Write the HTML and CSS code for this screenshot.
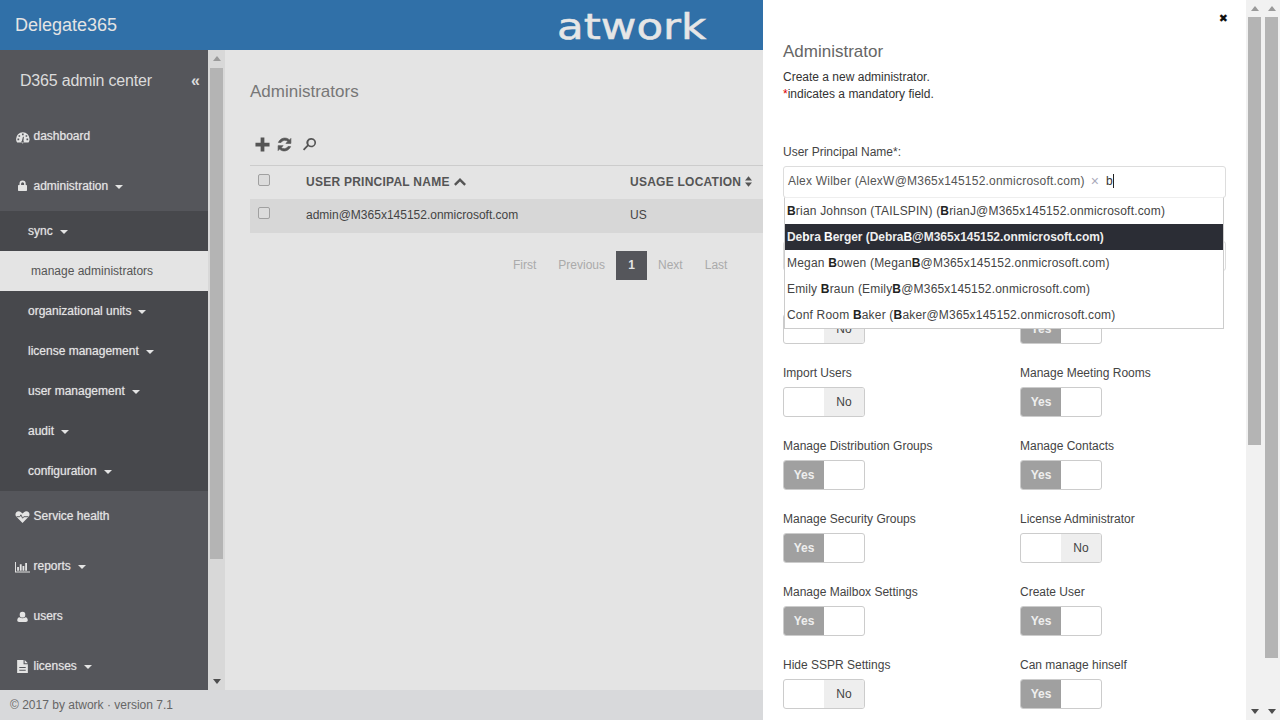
FILE: index.html
```html
<!DOCTYPE html>
<html lang="en">
<head>
<meta charset="utf-8">
<title>Delegate365</title>
<link rel="stylesheet" href="styles.css">
</head>
<body>
<div class="page">
  <header class="topbar">
    <div class="brand">Delegate365</div>
    <div class="logo">atwork</div>
  </header>
  <div class="middle">
    <aside class="sidebar">
      <div class="side-title"><span class="side-name">D365 admin center</span><span class="collapse">«</span></div>
      <nav class="nav">
        <a class="item"><svg class="ico" viewBox="0 0 14 14"><path transform="translate(.3 .8)" d="M7 2.200a6.300 6.300 0 0 0-6.300 6.300c0 1.300.3 2.300 1 3.300h10.600c.7-1 1-2 1-3.300A6.300 6.300 0 0 0 7 2.200zM6.200 3.400h1.600v1.600H6.200zM3 5h1.500v1.500H3zM9.600 5h1.500v1.500H9.600zM2 8h1.600v1.600H2zM10.400 8H12v1.600h-1.600zM6.100 10.400l1-4 .9.100-.4 4a1.200 1.200 0 1 1-1.500-.1z" fill-rule="evenodd"/></svg>dashboard</a>
        <a class="item"><svg class="ico" viewBox="0 0 14 14"><path d="M4.200 5.600V4.400a2.900 2.900 0 0 1 5.800 0v1.200h.6c.3 0 .6.300.6.600v4.400c0 .3-.3.600-.6.600H3.400c-.3 0-.6-.3-.6-.6V6.200c0-.3.300-.6.600-.6zm1.500 0h2.800V4.400a1.400 1.400 0 0 0-2.800 0z"/></svg>administration<i class="caret"></i></a>
        <div class="sub">
          <a class="subitem">sync<i class="caret"></i></a>
          <a class="subitem active">manage administrators</a>
          <a class="subitem">organizational units<i class="caret"></i></a>
          <a class="subitem">license management<i class="caret"></i></a>
          <a class="subitem">user management<i class="caret"></i></a>
          <a class="subitem">audit<i class="caret"></i></a>
          <a class="subitem">configuration<i class="caret"></i></a>
        </div>
        <a class="item"><svg class="ico" viewBox="0 0 14 14"><path d="M7 13 1.300 7.300C.1 6 .2 4 1.200 3 2.400 1.800 4.400 1.800 5.600 3L7 4.300 8.400 3c1.200-1.200 3.200-1.200 4.400 0 1 1 1.100 3-.1 4.300z"/><path d="M1.500 7.200h3l1-1.800 1.600 3.200 1.100-1.400h4.300" fill="none" stroke="#55565b" stroke-width=".9"/></svg>Service health</a>
        <a class="item"><svg class="ico" viewBox="0 0 14 14"><path d="M0 2.800h.9v8.800H14v.9H0zM2 7.500h1.700v3.500H2zM4.500 5h1.700v6H4.500zM7 6.500h1.700v4.500H7zM9.500 3.800h1.700V11H9.500z"/></svg>reports<i class="caret"></i></a>
        <a class="item"><svg class="ico" viewBox="0 0 14 14"><path d="M7 2.500a2.600 2.600 0 0 1 2.600 2.800A2.600 2.600 0 0 1 7 8a2.600 2.600 0 0 1-2.600-2.700A2.600 2.600 0 0 1 7 2.500zM4.200 7.800c.7.600 1.700.9 2.800.9s2.100-.3 2.800-.9c1.400.2 2.100 1.300 2.100 2.800 0 1-.7 1.600-1.700 1.600H3.800c-1 0-1.700-.6-1.700-1.600 0-1.500.7-2.600 2.100-2.800z"/></svg>users</a>
        <a class="item"><svg class="ico" viewBox="0 0 14 14"><path d="M2 1h6v3.800h4V13H2zM9 1l3 2.900H9zM4 7.500v1h6v-1zM4 10v1h6v-1z" fill-rule="evenodd"/></svg>licenses<i class="caret"></i></a>
      </nav>
    </aside>
    <div class="scrollbar side-scroll"><i class="arrow up"></i><div class="track"><div class="thumb"></div></div><i class="arrow down"></i></div>
    <main class="content">
      <h1 class="page-title">Administrators</h1>
      <div class="toolbar">
        <svg class="tool plus" viewBox="0 0 16 16"><path d="M6 .5h4v5.500h5.500v4H10v5.500H6V10H.5V6H6z"/></svg>
        <svg class="tool refresh" viewBox="0 0 16 16"><path d="M14.800 1.500v5.300H9.500l2-2a4.700 4.700 0 0 0-7.200 1H1.500a7.300 7.300 0 0 1 11.800-2.700zM1.200 14.500V9.200h5.300l-2 2a4.700 4.700 0 0 0 7.200-1h2.800a7.300 7.300 0 0 1-11.800 2.700z"/></svg>
        <svg class="tool search" viewBox="0 0 16 16"><path d="M10 1a5 5 0 1 1-3.300 8.800l-4.300 4.500L1 13l4.400-4.400A5 5 0 0 1 10 1zm0 1.800a3.200 3.200 0 1 0 0 6.400 3.200 3.200 0 0 0 0-6.400z" fill-rule="evenodd"/></svg>
      </div>
      <div class="table">
        <div class="row head">
          <div class="c-check"><i class="check"></i></div>
          <div class="c-name">User Principal Name <svg class="chev" viewBox="0 0 12 8"><path d="M6 0l6 6-1.700 1.700L6 3.400 1.700 7.700 0 6z"/></svg></div>
          <div class="c-loc">Usage Location <svg class="sort" viewBox="0 0 8 12"><path d="M4 0l4 4.800H0zM4 12L0 7.200h8z"/></svg></div>
        </div>
        <div class="row body">
          <div class="c-check"><i class="check"></i></div>
          <div class="c-name">admin@M365x145152.onmicrosoft.com</div>
          <div class="c-loc">US</div>
        </div>
      </div>
      <div class="pager">
        <a>First</a><a>Previous</a><a class="current">1</a><a>Next</a><a>Last</a>
      </div>
    </main>
  </div>
  <footer class="footer">© 2017 by atwork · version 7.1</footer>

  <section class="panel">
    <div class="panel-body">
      <div class="close">✖</div>
      <h2 class="panel-title">Administrator</h2>
      <p class="intro">Create a new administrator.<br><span class="req">*</span>indicates a mandatory field.</p>
      <label class="field-label">User Principal Name*:</label>
      <div class="picker">
        <div class="tagbox"><span class="tag">Alex Wilber (AlexW@M365x145152.onmicrosoft.com)</span><span class="tag-x">×</span><span class="typed">b</span><i class="cursor"></i></div>
        <ul class="suggest">
          <li><b>B</b>rian Johnson (TAILSPIN) (<b>B</b>rianJ@M365x145152.onmicrosoft.com)</li>
          <li class="hot">De<b>b</b>ra <b>B</b>erger (Debra<b>B</b>@M365x145152.onmicrosoft.com)</li>
          <li>Megan <b>B</b>owen (Megan<b>B</b>@M365x145152.onmicrosoft.com)</li>
          <li>Emily <b>B</b>raun (Emily<b>B</b>@M365x145152.onmicrosoft.com)</li>
          <li>Conf Room <b>B</b>aker (<b>B</b>aker@M365x145152.onmicrosoft.com)</li>
        </ul>
      </div>
      <div class="hidden-input"></div>
      <div class="grid">
        <div class="field"><div class="lab"></div><div class="toggle off"><span></span><span>No</span></div></div>
        <div class="field"><div class="lab"></div><div class="toggle on"><span>Yes</span><span></span></div></div>
        <div class="field"><div class="lab">Import Users</div><div class="toggle off"><span></span><span>No</span></div></div>
        <div class="field"><div class="lab">Manage Meeting Rooms</div><div class="toggle on"><span>Yes</span><span></span></div></div>
        <div class="field"><div class="lab">Manage Distribution Groups</div><div class="toggle on"><span>Yes</span><span></span></div></div>
        <div class="field"><div class="lab">Manage Contacts</div><div class="toggle on"><span>Yes</span><span></span></div></div>
        <div class="field"><div class="lab">Manage Security Groups</div><div class="toggle on"><span>Yes</span><span></span></div></div>
        <div class="field"><div class="lab">License Administrator</div><div class="toggle off"><span></span><span>No</span></div></div>
        <div class="field"><div class="lab">Manage Mailbox Settings</div><div class="toggle on"><span>Yes</span><span></span></div></div>
        <div class="field"><div class="lab">Create User</div><div class="toggle on"><span>Yes</span><span></span></div></div>
        <div class="field"><div class="lab">Hide SSPR Settings</div><div class="toggle off"><span></span><span>No</span></div></div>
        <div class="field"><div class="lab">Can manage hinself</div><div class="toggle on"><span>Yes</span><span></span></div></div>
      </div>
    </div>
    <div class="scrollbar panel-scroll"><i class="arrow up"></i><div class="track"><div class="thumb"></div></div><i class="arrow down"></i></div>
    <div class="scrollbar outer-scroll"><i class="arrow up"></i><div class="track"><div class="thumb"></div></div><i class="arrow down"></i></div>
  </section>
</div>
</body>
</html>
```
FILE: styles.css
```css
* { box-sizing: border-box; }
html, body { margin: 0; height: 100%; overflow: hidden; }
body { font-family: "Liberation Sans", Arial, sans-serif; font-size: 12px; color: #333; }
.page { position: relative; width: 1280px; height: 720px; display: flex; flex-direction: column; background: #e4e4e4; overflow: hidden; }

.topbar { height: 50px; flex: none; background: #3070a8; display: flex; align-items: center; position: relative; padding-left: 15px; }
.brand { font-size: 18px; color: #e4e4e4; }
.logo { position: absolute; left: 557px; top: 5px; font-family: "DejaVu Sans", sans-serif; font-size: 36px; line-height: 44px; color: #e6e6e6; font-weight: 400; -webkit-text-stroke: .5px #e6e6e6; transform: scaleX(1.21); transform-origin: left top; }

.middle { flex: 1; display: flex; min-height: 0; }
.sidebar { width: 208px; flex: none; background: #55565b; color: #e4e4e4; overflow: hidden; }
.side-title { height: 61px; display: flex; align-items: center; justify-content: space-between; padding: 0 8px 0 20px; font-size: 16px; color: #dcdcdc; }
.side-name { letter-spacing: -.2px; }
.collapse { font-size: 16px; font-weight: 700; padding-top: 1px; }
.nav { display: flex; flex-direction: column; }
.item { height: 50px; flex: none; display: flex; align-items: center; padding-left: 15px; text-shadow: 0 0 1px rgba(228,228,228,.6); }
.ico { width: 15px; height: 15px; flex: none; margin-right: 3.5px; fill: #e4e4e4; }
.caret { display: inline-block; width: 0; height: 0; margin-left: 7px; margin-top: 1px; border-left: 4px solid transparent; border-right: 4px solid transparent; border-top: 4px solid #e4e4e4; }
.sub { background: #47484c; display: flex; flex-direction: column; }
.subitem { height: 40px; flex: none; display: flex; align-items: center; padding-left: 28px; text-shadow: 0 0 1px rgba(228,228,228,.6); }
.subitem.active { background: #e4e4e4; color: #555; padding-left: 31px; text-shadow: none; }

.scrollbar { width: 17px; flex: none; background: #d8d8d8; display: flex; flex-direction: column; align-items: center; }
.track { flex: 1; width: 100%; padding: 0 2px; min-height: 0; }
.thumb { width: 13px; background: #b4b4b4; }
.arrow { display: block; width: 0; height: 0; flex: none; margin: 6px 0; border-left: 4px solid transparent; border-right: 4px solid transparent; }
.arrow.up { border-bottom: 5px solid #9a9a9a; }
.arrow.down { border-top: 5px solid #4d4d4d; }
.side-scroll .thumb { height: 491px; margin-top: 1px; }

.content { flex: 1; min-width: 0; padding-left: 25px; overflow: hidden; }
.page-title { margin: 32px 0 0; height: 20px; font-size: 17px; line-height: 20px; font-weight: 400; color: #777; }
.toolbar { height: 24px; margin-top: 30px; display: flex; align-items: center; padding-left: 5px; }
.tool { fill: #555; flex: none; }
.plus { width: 15px; height: 15px; }
.refresh { width: 15px; height: 15px; margin-left: 7px; stroke: #555; stroke-width: .7; }
.search { width: 15px; height: 15px; margin-left: 10px; }

.table { margin-top: 9px; width: 1000px; border-top: 1px solid #ccc; }
.row { display: flex; align-items: center; padding-bottom: 2px; }
.row.head { height: 33px; font-weight: 700; text-transform: uppercase; letter-spacing: .25px; color: #555; }
.row.body { height: 34px; background: #d7d7d7; color: #444; }
.c-check { width: 56px; flex: none; padding-left: 8px; display: flex; padding-bottom: 3px; }
.row.body .c-check { padding-bottom: 5px; }
.c-name { width: 324px; flex: none; display: flex; align-items: center; gap: 4px; }
.c-loc { flex: 1; display: flex; align-items: center; gap: 4px; }
.check { display: block; width: 12px; height: 12px; border: 1px solid #a0a0a0; border-radius: 2px; background: #dcdcdc; }
.chev { width: 12px; height: 8px; fill: #555; }
.sort { width: 7px; height: 11px; fill: #555; }
.pager { display: flex; align-items: center; margin: 18px 0 0 252px; height: 29px; color: #aaa; }
.pager a { padding: 0 11px; line-height: 29px; }
.pager a.current { width: 31px; padding: 0; text-align: center; background: #55565b; color: #e4e4e4; font-weight: 700; }

.footer { height: 30px; flex: none; background: #d8d9db; color: #666; display: flex; align-items: center; padding-left: 10px; }

.panel { position: absolute; left: 763px; top: 0; right: 0; bottom: 0; display: flex; background: #fff; overflow: hidden; color: #333; }
.panel-body { flex: 1; min-width: 0; padding: 0 20px; position: relative; }
.close { position: absolute; right: 18px; top: 12px; font-size: 11px; line-height: 14px; color: #111; font-family: "DejaVu Sans", sans-serif; }
.panel-title { margin: 42px 0 0; font-size: 17px; line-height: 20px; font-weight: 400; color: #666; }
.intro { margin: 7px 0 0; line-height: 17px; color: #333; }
.req { color: #d00; }
.field-label { display: block; margin-top: 42px; line-height: 14px; color: #444; }
.picker { position: relative; margin-top: 7px; width: 443px; }
.tagbox { height: 32px; border: 1px solid #ddd; border-radius: 3px; display: flex; align-items: center; padding: 0 0 2px 4px; color: #555; font-size: 12px; letter-spacing: .22px; background: #fff; }
.tag-x { margin-left: 6px; color: #aab; font-size: 14px; }
.typed { margin-left: 7px; color: #333; }
.cursor { width: 1px; height: 14px; background: #222; }
.suggest { position: absolute; left: 1px; top: 31px; width: 440px; margin: 0; padding: 0; list-style: none; background: #fff; border: 1px solid #ccc; border-top-color: #eee; z-index: 2; }
.suggest li { height: 26px; line-height: 26px; padding-left: 2px; color: #444; letter-spacing: .185px; }
.suggest b { color: #222; }
.suggest li.hot { background: #2b2d35; color: #eee; font-weight: 700; letter-spacing: -.05px; }
.suggest li.hot b { color: #fff; }
.hidden-input { height: 30px; width: 443px; margin-top: 43px; border: 1px solid #ddd; border-radius: 3px; }
.grid { display: grid; grid-template-columns: 237px 1fr; row-gap: 13px; margin-top: 22px; }
.field { height: 60px; }
.lab { line-height: 14px; height: 21px; color: #444; }
.toggle { width: 82px; height: 30px; border: 1px solid #ccc; border-radius: 3px; display: flex; overflow: hidden; background: #fff; }
.toggle span { flex: 1; display: flex; align-items: center; justify-content: center; }
.toggle.on span:first-child { background: #a0a0a0; color: #eee; font-weight: 700; }
.toggle.off span:last-child { background: #eee; color: #444; }

.panel-scroll, .outer-scroll { background: #f1f1f1; }
.panel-scroll .thumb { height: 428px; }
.outer-scroll .thumb { height: 641px; }
```
